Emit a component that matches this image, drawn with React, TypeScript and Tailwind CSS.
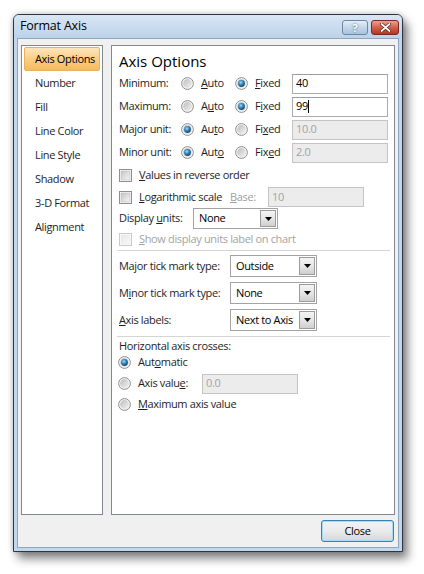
import React, { useId } from "react";

function Radio({ checked }: { checked?: boolean }) {
  const id = useId().replace(/:/g, "");
  return (
    <svg width="13" height="13" viewBox="0 0 13 13" className="shrink-0">
      <defs>
        <linearGradient id={id + "o"} x1="0" y1="0" x2="1" y2="1">
          <stop offset="0" stopColor="#bdbdbd" />
          <stop offset="1" stopColor="#f2f2f2" />
        </linearGradient>
        <radialGradient id={id + "d"} cx="0.4" cy="0.35" r="0.75">
          <stop offset="0" stopColor="#9fdcff" />
          <stop offset="0.45" stopColor="#2f86bd" />
          <stop offset="1" stopColor="#0d3350" />
        </radialGradient>
      </defs>
      <circle cx="6.5" cy="6.5" r="5.9" fill="#f4f4f4" stroke="#8e8f8f" strokeWidth="1" />
      <circle cx="6.5" cy="6.5" r="4.4" fill={`url(#${id}o)`} />
      {checked && <circle cx="6.5" cy="6.5" r="3.4" fill={`url(#${id}d)`} />}
    </svg>
  );
}

function Check({ disabled }: { disabled?: boolean }) {
  const id = useId().replace(/:/g, "");
  return (
    <svg width="13" height="13" viewBox="0 0 13 13" className="shrink-0">
      <defs>
        <linearGradient id={id} x1="0" y1="0" x2="1" y2="1">
          <stop offset="0" stopColor={disabled ? "#e6e6e6" : "#c4c4c4"} />
          <stop offset="1" stopColor={disabled ? "#fafafa" : "#f6f6f6"} />
        </linearGradient>
      </defs>
      <rect x="0.5" y="0.5" width="12" height="12" fill="#fff" stroke={disabled ? "#c9c9c9" : "#8e8f8f"} />
      <rect x="2" y="2" width="9" height="9" fill={`url(#${id})`} stroke={disabled ? "#e8e8e8" : "#b9b9b9"} strokeWidth="0.6" />
    </svg>
  );
}

function Field({ value, disabled, w, cursor }: { value: string; disabled?: boolean; w: string; cursor?: boolean }) {
  return (
    <div
      className={`${w} h-[20px] shrink-0 flex items-center pl-[3px] border ${
        disabled ? "bg-[#ececec] border-[#c4c4c4] text-[#a3a3a3]" : "bg-white border-[#abadb3] border-t-[#9a9ca3] text-black"
      }`}
    >
      <span>{value}</span>
      {cursor && <span className="inline-block w-px h-[13px] bg-black" />}
    </div>
  );
}

function Select({ value, w, h }: { value: string; w: string; h: string }) {
  return (
    <div className={`${w} ${h} shrink-0 flex items-stretch border border-[#a3a3a3] bg-white p-px`}>
      <div className="flex-1 flex items-center pl-[4px] text-black whitespace-nowrap overflow-hidden">{value}</div>
      <div className="w-[16px] shrink-0 border border-[#9b9b9b] bg-gradient-to-b from-[#f4f4f4] via-[#e6e6e6] to-[#cfcfcf] flex items-center justify-center">
        <svg width="7" height="4" viewBox="0 0 7 4">
          <path d="M0 0H7L3.5 4Z" fill="#000" />
        </svg>
      </div>
    </div>
  );
}

const navItems = ["Axis Options", "Number", "Fill", "Line Color", "Line Style", "Shadow", "3-D Format", "Alignment"];

export default function App() {
  return (
    <div className="w-[424px] h-[574px] bg-white pt-[14px] pl-[13px] font-['Open_Sans','Noto_Sans',sans-serif] text-[11px] tracking-[-0.35px] text-[#1e1e1e] overflow-hidden whitespace-nowrap">
      <div className="w-[390px] h-[538px] flex flex-col rounded-t-[6px] border border-[#2e3640] bg-[#c2d6ec] shadow-[0_0_6px_rgba(0,0,0,0.25),5px_7px_10px_rgba(0,0,0,0.45)]">
        {/* title bar */}
        <div className="h-[23px] flex items-center pl-[6px] pr-[3px] rounded-t-[5px] bg-gradient-to-b from-[#d9e6f4] to-[#bcd2ea]">
          <span className="text-[12.5px] tracking-[-0.2px] text-black">Format Axis</span>
          <div className="ml-auto flex gap-[3px] items-center pt-px">
            <div className="w-[26px] h-[15px] rounded-[3px] border border-[#6f87a3] bg-gradient-to-b from-[#e4eef8] via-[#c3d6ea] to-[#a9c3de] flex items-center justify-center text-[11px] font-bold text-white [text-shadow:0_0_2px_#2c4c70] leading-none">
              ?
            </div>
            <div className="w-[28px] h-[15px] rounded-[3px] border border-[#7a2a20] bg-gradient-to-b from-[#e9a292] via-[#d2604c] to-[#b8341e] flex items-center justify-center">
              <svg width="11" height="9" viewBox="0 0 11 9">
                <path d="M1.5 1L9.5 8M9.5 1L1.5 8" stroke="#5a1a12" strokeWidth="3.2" strokeLinecap="round" />
                <path d="M1.5 1L9.5 8M9.5 1L1.5 8" stroke="#fff" strokeWidth="1.8" strokeLinecap="round" />
              </svg>
            </div>
          </div>
        </div>
        {/* client */}
        <div className="flex-1 mx-[3px] mb-[3px] border border-[#8fa6bf] bg-[#f0f0f0] flex flex-col pt-[6px] px-[3px] pb-[4px]">
          <div className="flex gap-[8px] h-[470px]">
            {/* nav list */}
            <div className="w-[82px] shrink-0 border border-[#828790] bg-white p-px flex flex-col">
              {navItems.map((t, i) => (
                <div
                  key={t}
                  className={`h-[24px] flex items-center ${
                    i === 0
                      ? "pl-[10px] mx-px rounded-[2px] border border-[#e7b15e] bg-gradient-to-b from-[#fde6bd] via-[#fbcd85] to-[#f7bc5a] text-black"
                      : "pl-[12px]"
                  }`}
                >
                  {t}
                </div>
              ))}
            </div>
            {/* main panel */}
            <div className="flex-1 border border-[#828790] bg-white pl-[7px] pr-[4px] pt-[5px] flex flex-col">
              <div className="h-[21px] leading-[21px] text-[15px] tracking-normal text-black">Axis Options</div>
              {[
                { l: "Minimum:", a: false, auto: <><u>A</u>uto</>, fixed: <><u>F</u>ixed</>, v: "40", d: false, c: false },
                { l: "Maximum:", a: false, auto: <>A<u>u</u>to</>, fixed: <>F<u>i</u>xed</>, v: "99", d: false, c: true },
                { l: "Major unit:", a: true, auto: <>Au<u>t</u>o</>, fixed: <>Fi<u>x</u>ed</>, v: "10.0", d: true, c: false },
                { l: "Minor unit:", a: true, auto: <>Aut<u>o</u></>, fixed: <>Fix<u>e</u>d</>, v: "2.0", d: true, c: false },
              ].map((r) => (
                <div key={r.l} className="h-[23px] flex items-center">
                  <div className="w-[62px] shrink-0">{r.l}</div>
                  <div className="w-[54px] shrink-0 flex items-center gap-[7px]">
                    <Radio checked={r.a} />
                    <span>{r.auto}</span>
                  </div>
                  <div className="w-[57px] shrink-0 flex items-center gap-[7px]">
                    <Radio checked={!r.a} />
                    <span>{r.fixed}</span>
                  </div>
                  <Field value={r.v} disabled={r.d} w="w-[96px]" cursor={r.c} />
                </div>
              ))}
              <div className="h-[22px] flex items-center gap-[7px]">
                <Check />
                <span>
                  <u>V</u>alues in reverse order
                </span>
              </div>
              <div className="h-[22px] flex items-center">
                <div className="w-[111px] shrink-0 flex items-center gap-[7px]">
                  <Check />
                  <span>
                    <u>L</u>ogarithmic scale
                  </span>
                </div>
                <div className="w-[38px] shrink-0 text-[#a0a0a0]">
                  <u>B</u>ase:
                </div>
                <Field value="10" disabled w="w-[96px]" />
              </div>
              <div className="h-[21px] flex items-center">
                <div className="w-[74px] shrink-0">
                  Display <u>u</u>nits:
                </div>
                <Select value="None" w="w-[85px]" h="h-[21px]" />
              </div>
              <div className="h-[21px] flex items-center gap-[7px] text-[#a3a3a3]">
                <Check disabled />
                <span>
                  <u>S</u>how display units label on chart
                </span>
              </div>
              <div className="h-px bg-[#d5d5d5] ml-[-2px]" />
              <div className="h-[22px] mt-[4px] flex items-center">
                <div className="w-[111px] shrink-0">
                  Ma<u>j</u>or tick mark type:
                </div>
                <Select value="Outside" w="w-[87px]" h="h-[22px]" />
              </div>
              <div className="h-[22px] mt-[5px] flex items-center">
                <div className="w-[111px] shrink-0">
                  M<u>i</u>nor tick mark type:
                </div>
                <Select value="None" w="w-[87px]" h="h-[22px]" />
              </div>
              <div className="h-[22px] mt-[5px] flex items-center">
                <div className="w-[111px] shrink-0">
                  <u>A</u>xis labels:
                </div>
                <Select value="Next to Axis" w="w-[87px]" h="h-[22px]" />
              </div>
              <div className="h-px bg-[#d5d5d5] ml-[-2px] mt-[5px]" />
              <div className="h-[16px] mt-px flex items-center">Horizontal axis crosses:</div>
              <div className="h-[16px] flex items-center gap-[7px] ml-[-1px]">
                <Radio checked />
                <span>
                  Aut<u>o</u>matic
                </span>
              </div>
              <div className="h-[21px] mt-[3px] flex items-center ml-[-1px]">
                <div className="w-[84px] shrink-0 flex items-center gap-[7px]">
                  <Radio />
                  <span>
                    Axis valu<u>e</u>:
                  </span>
                </div>
                <Field value="0.0" disabled w="w-[96px]" />
              </div>
              <div className="h-[16px] mt-[2px] flex items-center gap-[7px] ml-[-1px]">
                <Radio />
                <span>
                  <u>M</u>aximum axis value
                </span>
              </div>
            </div>
          </div>
          <div className="flex justify-end mt-[5px] pr-px">
            <div className="w-[73px] h-[22px] rounded-[3px] border border-[#3c7fb1] shadow-[inset_0_0_0_1px_#a6dcf6] bg-gradient-to-b from-[#f2f2f2] via-[#ebebeb] to-[#d6d6d6] flex items-center justify-center text-black">
              Close
            </div>
          </div>
        </div>
      </div>
    </div>
  );
}
